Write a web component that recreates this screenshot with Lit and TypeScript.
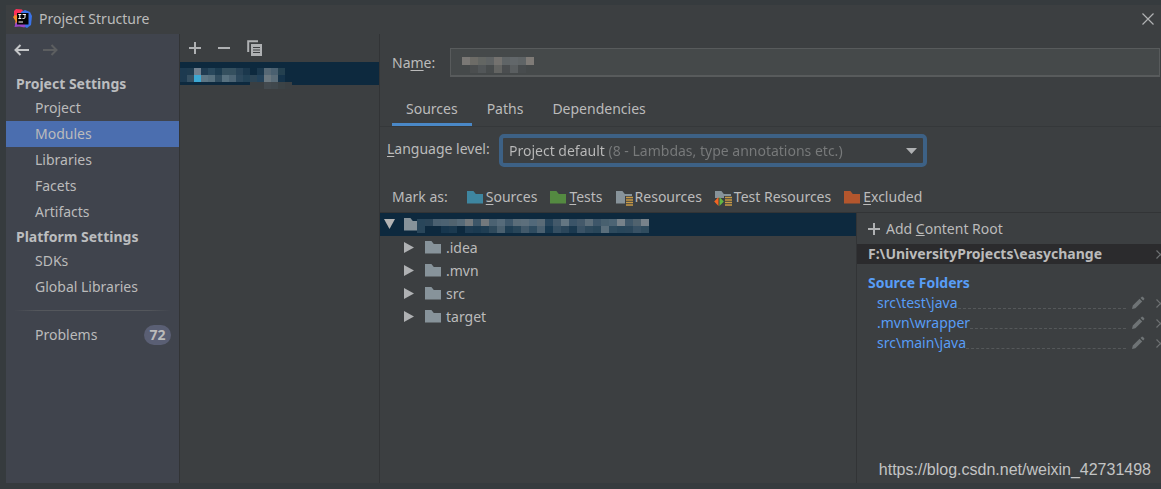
import { LitElement, html, svg, css } from "lit";
import { customElement, property, state } from "lit/decorators.js";

type Cell = [column: number, row: number, fill: string];

const row = (y: number, start: number, fills: string): Cell[] =>
  fills.split(" ").flatMap((fill, i): Cell[] => (fill === "-" ? [] : [[start + i, y, fill]]));

const MODULE_CELLS: Cell[] = [
  ...row(0, 0, "1d3a50 1f3b4f 71808f 203c51 29485c 1d3c50 35505f 35505f 284357 1b384d - 1b384d 566875 4a6070 24404f"),
  ...row(1, 0, "1d3a50 354f61 3da9d4 5d7684 566f7d 314d5f 58717f 4c6474 2c485c 234256 2b4455 23425a 6b7880 5a6c78 15334a"),
  ...row(2, 10, "3a3f42 3a3f42 434a4f 40484d 3c4346 3b4043"),
];

const NAME_CELLS: Cell[] = [
  ...row(0, 0, "7a7875 6d6c67 636663 5f6364 74726f 5f6466 62676a 5f6466 7f7b77"),
  ...row(1, 0, "- 4b4e4f 525658 484c4d 636462 4a4d4f 5a5e60 484c4e -"),
];

const ROOT_CELLS: Cell[] = [
  ...row(0, 0, "29465a 2c4659 4a6070 4c6272 51636f 566a78 73797d 3d5668 73797d 4b6272 566b7a 3f586b 5b6d79 5d6f7c 52697a 5a6b77 29465c 43596a 647682 3b5468 44596a 5d6e7a 3e5669 48606f 4c6474 77828a 3f5769 50626e 78828a"),
  ...row(1, 0, "29465a - - 17364d 1b394f - 1f3c52 1b3a50 203e53 2f4a5c 4a606f 1f3e53 294659 42596a 2f4c60 4a6070 183950 354f62 2b465a 1b394f 3a5265 2e495c 294659 5a6e7b 2d4a5d 28465a 2a465a 385164 304c5e"),
];

const folder = (fill: string, extra: unknown = "") => html`
  <svg width="18" height="17" viewBox="0 0 18 17" aria-hidden="true">
    <path d="M1 2h6.4l2.4 3H17v9.500H1z" fill=${fill}></path>${extra}
  </svg>`;

const stripes = svg`
  <path d="M10 7h8v10h-8z" fill="#3c3f41"></path>
  <path d="M11 8.500h7M11 11h7M11 13.500h7M11 16h7" stroke="#c99a45" stroke-width="1.500"></path>`;

const testMarks = svg`
  <path d="M0 9h18v8H0z" fill="#3c3f41"></path>
  <path d="M10 7h8v3h-8z" fill="#3c3f41"></path>
  <path d="M4.500 8v9L.2 12.500z" fill="#f26522"></path>
  <path d="M5.500 8v9l4.300-4.500z" fill="#62b543"></path>
  <path d="M11 8.500h7M11 11h7M11 13.500h7M11 16h7" stroke="#c99a45" stroke-width="1.500"></path>`;

const plus = html`<svg width="12" height="12" viewBox="0 0 12 12" aria-hidden="true">
  <path d="M6 0v12M0 6h12" stroke="#afb1b3" stroke-width="2"></path></svg>`;

const cross = html`<svg width="9" height="9" viewBox="0 0 9 9" aria-hidden="true">
  <path d="M.5.5l8 8M8.500.5l-8 8" stroke="#6e7173" stroke-width="1.200"></path></svg>`;

const pencil = html`<svg width="14" height="14" viewBox="0 0 14 14" aria-hidden="true">
  <path d="M1 13l.8-3.400L8.600 2.800l2.600 2.600-6.800 6.800zM9.500 1.900l1-1q.7-.6 1.400 0l1.200 1.200q.6.700 0 1.400l-1 1z" fill="#6e7375"></path></svg>`;

const logo = html`<svg width="19" height="19" viewBox="0 0 19 19" aria-hidden="true">
  <path d="M1 2l2-2 6 .5 2 3-2 4-8 1z" fill="#fc315a"></path>
  <path d="M0 8l2-2 4 1v7l-1 3-3-2 .5-3z" fill="#f58a2c"></path>
  <path d="M8 3l4-2 5 2 2 4-1 9-4 3-4-2z" fill="#3a73e8"></path>
  <path d="M1.500 18l1-4 4-2 6 4-1 2.500-5-1z" fill="#9a45c8"></path>
  <path d="M4 4h11.500v11.500H4z" fill="#050505"></path>
  <path d="M5.300 5.500h3M5.300 9.500h3M6.800 5.500v4M9.600 5.500h3.300M12 5.500v2.700q0 1.300-1.200 1.300H9.500M5.500 13h4.500" stroke="#fff" stroke-width="1" fill="none"></path>
</svg>`;

/** A block of coarse cells drawn in place of a hidden name. */
@customElement("redacted-text")
export class RedactedText extends LitElement {
  @property({ attribute: false }) cells: Cell[] = [];
  @property({ type: Number }) cellWidth = 8;
  @property({ type: Number }) cellHeight = 8;

  static styles = css`
    :host { display: block; line-height: 0; pointer-events: none; }
  `;

  render() {
    const w = this.cellWidth;
    const h = this.cellHeight;
    const columns = Math.max(...this.cells.map((c) => c[0])) + 1;
    const rows = Math.max(...this.cells.map((c) => c[1])) + 1;
    return html`<svg width=${columns * w} height=${rows * h} shape-rendering="crispEdges" aria-hidden="true">
      ${this.cells.map(([x, y, fill]) => svg`<rect x=${x * w} y=${y * h} width=${w} height=${h} fill=${"#" + fill}></rect>`)}
    </svg>`;
  }
}

@customElement("settings-nav")
export class SettingsNav extends LitElement {
  @state() private selected = "Modules";

  private groups = [
    { title: "Project Settings", items: ["Project", "Modules", "Libraries", "Facets", "Artifacts"] },
    { title: "Platform Settings", items: ["SDKs", "Global Libraries"] },
  ];

  static styles = css`
    :host { display: block; background: #40444d; border-right: 1px solid #323436; }
    button { font: inherit; color: inherit; background: none; border: 0; padding: 0; text-align: left; }
    .history { display: flex; gap: 14px; padding: 10px 8px 16px; height: 12px; }
    .history button { display: flex; }
    h2 { margin: 0; padding: 0 10px; font-size: 14px; line-height: 23px; font-weight: 700; color: #bbbdbf; }
    .item { display: block; width: 100%; line-height: 26px; padding-left: 29px; }
    .selected { background: #4b6eaf; }
    .rule { height: 1px; margin: 10px 8px 11px; background: linear-gradient(90deg, #40444d, #54575c 15%, #54575c 85%, #40444d); }
    .problems { display: flex; align-items: center; justify-content: space-between; padding-right: 8px; width: 100%; padding-left: 29px; line-height: 26px; box-sizing: border-box; }
    .count { background: #5a5f74; border-radius: 10px; width: 27px; line-height: 20px; text-align: center; font-weight: 700; font-size: 14px; }
  `;

  render() {
    return html`
      <div class="history">
        <button aria-label="Back"><svg width="15" height="12" viewBox="0 0 15 12"><path d="M15 6H1.500M6.500 1l-5 5 5 5" fill="none" stroke="#c4c6c8" stroke-width="2"></path></svg></button>
        <button aria-label="Forward" disabled><svg width="15" height="12" viewBox="0 0 15 12"><path d="M0 6h13.500M8.500 1l5 5-5 5" fill="none" stroke="#5c5e60" stroke-width="2"></path></svg></button>
      </div>
      <nav>
        ${this.groups.map((g) => html`
          <h2>${g.title}</h2>
          ${g.items.map((name) => html`
            <button class="item ${name === this.selected ? "selected" : ""}" @click=${() => (this.selected = name)}>${name}</button>`)}
        `)}
        <div class="rule"></div>
        <button class="problems">Problems <span class="count">72</span></button>
      </nav>`;
  }
}

@customElement("module-list")
export class ModuleList extends LitElement {
  static styles = css`
    :host { display: block; border-right: 1px solid #323436; }
    button { background: none; border: 0; padding: 0; display: flex; }
    .tools { display: flex; align-items: center; gap: 17px; height: 28px; padding-left: 9px; }
    .module { width: 100%; height: 23px; background: #0d293e; padding-top: 6px; box-sizing: border-box; }
  `;

  render() {
    return html`
      <div class="tools">
        <button aria-label="Add">${plus}</button>
        <button aria-label="Remove"><svg width="12" height="12" viewBox="0 0 12 12"><path d="M0 6h12" stroke="#afb1b3" stroke-width="2"></path></svg></button>
        <button aria-label="Copy"><svg width="16" height="16" viewBox="0 0 16 16">
          <path d="M1.200 12V1.200H11" fill="none" stroke="#afb1b3" stroke-width="2"></path>
          <path d="M4 4h11v12H4z" fill="#afb1b3"></path>
          <path d="M6 7.500h7M6 10h7M6 12.500h7" stroke="#3c3f41" stroke-width="1.200"></path></svg></button>
      </div>
      <button class="module" aria-label="Selected module">
        <redacted-text .cells=${MODULE_CELLS} .cellWidth=${7} .cellHeight=${7}></redacted-text>
      </button>`;
  }
}

@customElement("source-tree")
export class SourceTree extends LitElement {
  static styles = css`
    :host { display: block; }
    ul { list-style: none; margin: 0; padding: 0; }
    .row { display: flex; align-items: center; height: 23px; padding-left: 24px; }
    .root { background: #0d293e; padding-left: 3px; }
    .root redacted-text { padding-top: 2px; margin-left: -4px; }
    .toggle { border: 0; background: none; padding: 0; margin-right: 7px; display: flex; }
    .row .leaf-toggle { margin-right: 10px; }
    .label { margin-left: 4px; }
  `;

  render() {
    return html`
      <ul>
        <li>
          <div class="row root">
            <button class="toggle" aria-label="Collapse"><svg width="13" height="16" viewBox="0 0 13 16"><path d="M1 2h11L6.500 12z" fill="#b4b4b4"></path></svg></button>
            ${folder("#87939a")}
            <redacted-text .cells=${ROOT_CELLS} .cellWidth=${8} .cellHeight=${7}></redacted-text>
          </div>
          <ul>
            ${[".idea", ".mvn", "src", "target"].map((name) => html`
              <li class="row">
                <button class="toggle leaf-toggle" aria-label="Expand"><svg width="10" height="11" viewBox="0 0 10 11"><path d="M0 0v11l10-5.500z" fill="#afb1b3"></path></svg></button>
                ${folder("#87939a")}<span class="label">${name}</span>
              </li>`)}
          </ul>
        </li>
      </ul>`;
  }
}

@customElement("content-roots")
export class ContentRoots extends LitElement {
  static styles = css`
    :host { display: block; border-left: 1px solid #323436; overflow: hidden; }
    button { font: inherit; color: inherit; background: none; border: 0; padding: 0; display: flex; align-items: center; flex: none; }
    .add { gap: 6px; height: 31px; padding-left: 11px; }
    .path { display: flex; align-items: center; justify-content: space-between; height: 20px; padding-left: 11px; margin-right: -4px; background: #2b2b2d; font-weight: 700; font-size: 14px; }
    h3 { margin: 9px 0 0; padding-left: 11px; font-size: 14px; line-height: 20px; color: #589df6; }
    .source { display: flex; align-items: center; height: 20px; padding-left: 20px; margin-right: -4px; }
    .source a { color: #589df6; text-decoration: none; }
    .dots { flex: 1; height: 11px; border-bottom: 1px dashed #55585a; }
    .edit { margin: 0 11px 0 5px; }
  `;

  render() {
    return html`
      <button class="add">${plus}<span>Add <u>C</u>ontent Root</span></button>
      <div class="path"><span>F:\\UniversityProjects\\easychange</span><button aria-label="Remove content root">${cross}</button></div>
      <h3>Source Folders</h3>
      ${["src\\test\\java", ".mvn\\wrapper", "src\\main\\java"].map((path) => html`
        <div class="source">
          <a href="#">${path}</a><span class="dots"></span>
          <button class="edit" aria-label="Edit">${pencil}</button>
          <button aria-label="Remove">${cross}</button>
        </div>`)}`;
  }
}

@customElement("module-editor")
export class ModuleEditor extends LitElement {
  @state() private tab = "Sources";

  static styles = css`
    :host { display: flex; flex-direction: column; min-width: 0; }
    button { font: inherit; color: inherit; background: none; border: 0; padding: 0; }
    u { text-underline-offset: 2px; }
    .name { display: flex; align-items: center; padding: 14px 1px 0 12px; }
    .name label { width: 58px; }
    .field { flex: 1; position: relative; }
    .field input { display: block; width: 100%; height: 29px; box-sizing: border-box; background: #45494a; border: 2px solid #585b5c; border-width: 1px 1px 2px; color: #bbb; font: inherit; }
    .field redacted-text { position: absolute; left: 12px; top: 9px; }
    .tabs { display: flex; gap: 1px; padding: 17px 12px 0; border-bottom: 1px solid #35383a; }
    .tab { height: 32px; padding: 0 14px; border-bottom: 3px solid transparent; }
    .current { border-bottom-color: #4a88c7; }
    .level { display: flex; align-items: center; padding: 7px 7px 0; }
    .level label { width: 112px; margin-top: -4px; }
    .combo { position: relative; width: 428px; height: 33px; box-sizing: border-box; border: 4px solid #3d6185; border-radius: 5px; }
    .combo select {
      appearance: none; display: block; width: 100%; height: 100%; border: 0; outline: 0; padding: 0 0 0 6px;
      font: inherit; color: transparent;
      background: linear-gradient(90deg, #bbbbbb 103px, #787a7b 103px); background-clip: text; -webkit-background-clip: text;
    }
    .combo option { color: #bbb; background: #3c3f41; }
    .combo svg { position: absolute; right: 6px; top: 10px; pointer-events: none; }
    .marks { display: flex; align-items: center; height: 26px; padding: 17px 12px 2px; gap: 12px; }
    .marks span { margin-right: 6px; }
    .marks button { display: flex; align-items: center; gap: 2px; white-space: nowrap; }
    .panes { flex: 1; display: grid; grid-template-columns: 476fr 305fr; border-top: 1px solid #323436; }
  `;

  render() {
    return html`
      <div class="name">
        <label for="name">Na<u>m</u>e:</label>
        <div class="field">
          <input id="name" type="text">
          <redacted-text .cells=${NAME_CELLS} .cellWidth=${8} .cellHeight=${8}></redacted-text>
        </div>
      </div>
      <div class="tabs" role="tablist">
        ${["Sources", "Paths", "Dependencies"].map((t) => html`
          <button role="tab" aria-selected=${t === this.tab} class="tab ${t === this.tab ? "current" : ""}" @click=${() => (this.tab = t)}>${t}</button>`)}
      </div>
      <div class="level">
        <label for="level"><u>L</u>anguage level:</label>
        <div class="combo">
          <select id="level"><option>Project default (8 - Lambdas, type annotations etc.)</option></select>
          <svg width="11" height="6" viewBox="0 0 11 6" aria-hidden="true"><path d="M0 0h11L5.500 6z" fill="#afb1b3"></path></svg>
        </div>
      </div>
      <div class="marks">
        <span>Mark as:</span>
        <button>${folder("#3e86a0")}<div><u>S</u>ources</div></button>
        <button>${folder("#548a41")}<div><u>T</u>ests</div></button>
        <button>${folder("#87939a", stripes)}<div>Resources</div></button>
        <button>${folder("#87939a", testMarks)}<div>Test Resources</div></button>
        <button>${folder("#b3562d")}<div><u>E</u>xcluded</div></button>
      </div>
      <div class="panes">
        <source-tree></source-tree>
        <content-roots></content-roots>
      </div>`;
  }
}

@customElement("app-root")
export class AppRoot extends LitElement {
  static styles = css`
    :host {
      display: flex; flex-direction: column; position: relative; min-height: 100vh; box-sizing: border-box;
      border: solid #363b3e; border-width: 5px 0 6px 6px; overflow: hidden;
      background: #3c3f41; color: #bbbbbb; font: 14px/20px "Noto Sans", "Open Sans", sans-serif;
    }
    header { display: flex; align-items: center; height: 27px; padding: 0 7px 2px; }
    h1 { flex: 1; margin: 0 0 0 7px; font-size: 14px; font-weight: 400; }
    .close { background: none; border: 0; padding: 0; display: flex; }
    main { flex: 1; display: grid; grid-template-columns: 174px 200px 1fr; }
    .watermark { position: absolute; right: 10px; bottom: 3px; font: 16px/20px "Liberation Sans", Arial, sans-serif; color: #c3c4c4; }
  `;

  render() {
    return html`
      <header>
        ${logo}
        <h1>Project Structure</h1>
        <button class="close" aria-label="Close"><svg width="12" height="12" viewBox="0 0 12 12"><path d="M.5.5l11 11M11.500.5l-11 11" stroke="#b0b2b3" stroke-width="1.200"></path></svg></button>
      </header>
      <main>
        <settings-nav></settings-nav>
        <module-list></module-list>
        <module-editor></module-editor>
      </main>
      <div class="watermark">https://blog.csdn.net/weixin_42731498</div>`;
  }
}
